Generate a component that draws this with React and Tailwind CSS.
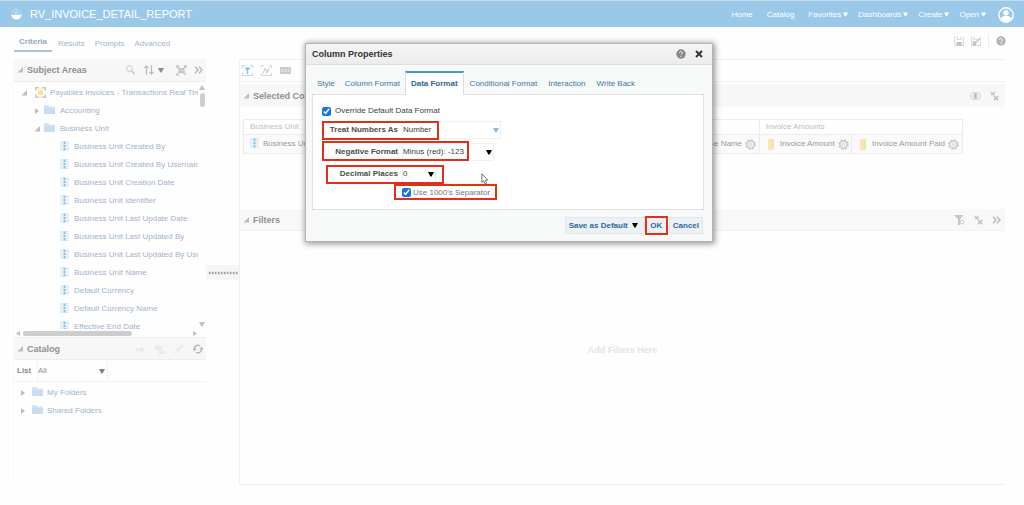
import React from "react";

const fields = [
  "Business Unit Created By",
  "Business Unit Created By Username",
  "Business Unit Creation Date",
  "Business Unit Identifier",
  "Business Unit Last Update Date",
  "Business Unit Last Updated By",
  "Business Unit Last Updated By Username",
  "Business Unit Name",
  "Default Currency",
  "Default Currency Name",
  "Effective End Date",
];

function Down({ className = "", size = "h-[5px] w-[6px]" }) {
  return (
    <svg viewBox="0 0 6 5" className={"shrink-0 " + size + " " + className} fill="currentColor" aria-hidden="true">
      <path d="M0 0h6L3.6 4.6H2.4z" />
    </svg>
  );
}

function Toggle({ open }) {
  return (
    <svg viewBox="0 0 6 6" className="h-[6px] w-[6px] shrink-0 text-[#bdbdbd]" fill="currentColor" aria-hidden="true">
      {open ? <path d="M6 0v5.6H0.4z" /> : <path d="M1 0l4 3-4 3z" />}
    </svg>
  );
}

function Folder() {
  return (
    <svg viewBox="0 0 11 10" className="mb-[2px] h-[10px] w-[11px] shrink-0" aria-hidden="true">
      <path d="M0 .6h4.6l1 1.2H0z" fill="#c3d3e4" />
      <path d="M0 1.8h11V9H0z" fill="#c8ddf1" />
      <path d="M0 1.8h11v.8H0z" fill="#dbe9f6" />
    </svg>
  );
}

function ColumnIcon() {
  return (
    <svg viewBox="0 0 9 10" className="mb-[3px] h-[10px] w-[9px] shrink-0" aria-hidden="true">
      <path d="M0 0h9v10H0z" fill="#e4eef7" />
      <path d="M3 0h3v10H3z" fill="#bfe1f0" />
      <path d="M4 1h1v2H4zM4 4h1v2H4zM4 7h1v2H4z" fill="#86bbd6" />
      <path d="M0 3.4h9M0 6.6h9" stroke="#f6fafd" strokeWidth=".5" />
    </svg>
  );
}

function SubjectIcon() {
  return (
    <svg viewBox="0 0 11 11" className="mb-[2px] h-[11px] w-[11px] shrink-0" aria-hidden="true">
      <circle cx="5.5" cy="5.5" r="3" fill="#f8e69a" />
      <path d="M.8 3.5V.8h3M7.2.8h3v2.7M10.2 7.5v2.7h-3M3.8 10.2h-3V7.5" fill="none" stroke="#cfc3cb" strokeWidth="1.5" />
      <path d="M4 1.2h3M4 9.8h3" stroke="#f6e3b4" />
    </svg>
  );
}

function Gear() {
  return (
    <svg viewBox="0 0 11 11" className="h-[11px] w-[11px] shrink-0" fill="none" stroke="#cacaca" aria-hidden="true">
      <circle cx="5.5" cy="5.5" r="4.6" strokeWidth="1.5" strokeDasharray="2.1 1.5" />
      <circle cx="5.5" cy="5.5" r="3.6" strokeWidth="1.5" />
      <circle cx="5.5" cy="5.5" r="1.2" strokeWidth="1" />
    </svg>
  );
}

function Measure() {
  return (
    <svg viewBox="0 0 6 11" className="h-[11px] w-[6px] shrink-0" aria-hidden="true">
      <path d="M0 0h6v11H0z" fill="#fae5b6" />
      <path d="M3 2h3M4 4h2M3 6h3M4 8h2" stroke="#f3d591" strokeWidth=".7" />
    </svg>
  );
}

function Help({ className }) {
  return (
    <svg viewBox="0 0 10 10" className={"h-[10px] w-[10px] " + className} aria-hidden="true">
      <circle cx="5" cy="5" r="4.7" fill="currentColor" />
      <path d="M3.5 4a1.5 1.4 0 1 1 2.3 1.1c-.6.4-.8.5-.8 1.1" fill="none" stroke="#fff" strokeWidth="1" />
      <path d="M4.5 7h1v1h-1z" fill="#fff" />
    </svg>
  );
}

function Chevrons() {
  return (
    <svg viewBox="0 0 9 8" className="h-[8px] w-[9px]" fill="none" stroke="#b4b4b4" strokeWidth="1.3" aria-hidden="true">
      <path d="M1 .8L4 4 1 7.2M5 .8L8 4 5 7.2" />
    </svg>
  );
}

function RemoveIcon() {
  return (
    <svg viewBox="0 0 9 10" className="h-[10px] w-[9px]" fill="none" stroke="#c2c2c2" aria-hidden="true">
      <path d="M.6 1l4 3.4M4.8.8L1.4 4.400" strokeWidth="1.3" />
      <path d="M4 5l4.2 4.2M8.2 5L4 9.2" strokeWidth="1.7" />
    </svg>
  );
}

function IconButton({ label, children, className = "" }) {
  return (
    <button type="button" aria-label={label} className={"flex items-center justify-center " + className}>
      {children}
    </button>
  );
}

function NavLink({ children, menu }) {
  return (
    <a href="#" className="flex items-center gap-[2px]">
      {children}
      {menu && <Down size="h-[5px] w-[5px]" className="mb-px" />}
    </a>
  );
}

function Header() {
  return (
    <header className="flex h-[27px] items-center justify-between border-t border-[#c5dbe6] bg-[#99c8e9] pl-[11px] pr-[10px] text-white">
      <div className="flex items-center gap-[8px]">
        <svg viewBox="0 0 11 11" className="h-[11px] w-[11px]" aria-hidden="true">
          <path d="M.3 5.2a5.2 5.2 0 0 0 10.4 0c-1.6 1.4-3.2.1-5 .2S2.300 6.800.3 5.200z" fill="#fff" />
          <path d="M.8 4.200C1.400 2 3.200.600 5.500.600s4.100 1.400 4.700 3.600" fill="none" stroke="#cfe4f3" strokeWidth=".8" />
          <path d="M3.400 4.500l2-1.500 2 1.400" fill="none" stroke="#fff" strokeWidth=".8" />
        </svg>
        <h1 className="text-[11px]">RV_INVOICE_DETAIL_REPORT</h1>
      </div>
      <nav className="flex items-center gap-[10px] pt-px">
        <div className="flex gap-[14px] pr-1">
          <NavLink>Home</NavLink>
          <NavLink>Catalog</NavLink>
        </div>
        <NavLink menu>Favorites</NavLink>
        <NavLink menu>Dashboards</NavLink>
        <NavLink menu>Create</NavLink>
        <NavLink menu>Open</NavLink>
        <IconButton label="Account" className="ml-[2px]">
          <svg viewBox="0 0 16 16" className="h-4 w-4" aria-hidden="true">
            <circle cx="8" cy="8" r="7.2" fill="none" stroke="#fff" strokeWidth="1.4" />
            <circle cx="8" cy="5.800" r="2.700" fill="#fff" />
            <path d="M2.800 11.200c1.500-1.900 3.200-2.500 5.200-2.500s3.700.600 5.200 2.500C12 13.600 10 14.600 8 14.600s-4-1-5.200-3.400z" fill="#fff" />
          </svg>
        </IconButton>
      </nav>
    </header>
  );
}

function PageTabs() {
  return (
    <div className="flex h-8 items-start justify-between pl-[14px] pr-[18px] text-[#a3b6ce]">
      <div className="flex gap-[6px]">
        <button type="button" className="h-[25px] border-b-2 border-[#a9c3dc] px-[5px] pt-[6px] font-bold text-[#93a8c4]">Criteria</button>
        <div className="flex gap-[10px] pt-[8px]">
          <button type="button">Results</button>
          <button type="button">Prompts</button>
          <button type="button">Advanced</button>
        </div>
      </div>
      <div className="flex h-[28px] items-center gap-[7px]">
        <IconButton label="Save">
          <svg viewBox="0 0 10 10" className="h-[10px] w-[10px]" aria-hidden="true">
            <path d="M.6.5v9h8.800v-9M3 .5v3h4v-3" fill="none" stroke="#d8d8d8" />
            <path d="M2.500 6h5v3.500h-5z" fill="#bfbfbf" />
          </svg>
        </IconButton>
        <IconButton label="Save as">
          <svg viewBox="0 0 10 10" className="h-[10px] w-[10px]" aria-hidden="true">
            <path d="M.6.5v9h8.800v-9M3 .5v3h3.500" fill="none" stroke="#d8d8d8" />
            <path d="M3 8.500l5.500-6M2.500 6h2v3h-2z" fill="none" stroke="#c4c4c4" strokeWidth="1.300" />
          </svg>
        </IconButton>
        <span className="h-[14px] w-px bg-[#eeeeee]" />
        <IconButton label="Help"><Help className="text-[#b4b4b4]" /></IconButton>
      </div>
    </div>
  );
}

function TreeRow({ children, className }) {
  return <li className={"flex h-[18px] items-center whitespace-nowrap " + className}>{children}</li>;
}

function PanelTitle({ children }) {
  return (
    <h2 className="flex items-center gap-1 whitespace-nowrap text-[9px] font-bold text-[#8f8f8f]">
      <Toggle open />
      {children}
    </h2>
  );
}

function Sidebar() {
  return (
    <aside className="w-[193px] shrink-0 border-l border-[#f8f8f8]">
      <div className="flex h-[23px] items-center justify-between border-b border-[#eeeeee] bg-[#f7f7f7] pl-[3px] pr-[3px]">
        <PanelTitle>Subject Areas</PanelTitle>
        <div className="flex items-center">
          <IconButton label="Search" className="mr-[9px]">
            <svg viewBox="0 0 9 10" className="h-[10px] w-[9px]" fill="none" stroke="#c9c9c9" aria-hidden="true">
              <circle cx="3.500" cy="3.500" r="2.900" />
              <path d="M5.500 5.800L8.400 9" strokeWidth="1.600" />
            </svg>
          </IconButton>
          <IconButton label="Sort" className="mr-[12px] gap-[4px] text-[#8f8f8f]">
            <svg viewBox="0 0 10 10" className="h-[10px] w-[10px]" fill="none" stroke="#b9b9b9" strokeWidth="1.200" aria-hidden="true">
              <path d="M2.500 10V1M.4 3.200L2.500 1l2.100 2.200M7.500 0v9M5.400 6.800L7.500 9l2.100-2.200" />
            </svg>
            <Down />
          </IconButton>
          <IconButton label="Add subject area" className="mr-[7px]">
            <svg viewBox="0 0 11 11" className="h-[11px] w-[11px]" fill="none" stroke="#c4c4c4" strokeWidth="1.200" aria-hidden="true">
              <path d="M.8 3V.8H3M8 .8h2.200V3M.8 8v2.200H3M3 3.500h5v4H3zM1.500 1.500l7 7M9.500 1.500l-7 7" />
              <path d="M6.500 8.500h4M8.500 6.500v4" stroke="#d4d4d4" />
            </svg>
          </IconButton>
          <IconButton label="Collapse panel"><Chevrons /></IconButton>
        </div>
      </div>

      <div className="flex h-[247px] pt-[2px]">
        <ul className="min-w-0 flex-1 overflow-hidden text-[#a3b3c8]">
          <TreeRow className="gap-1 pl-[7px]">
            <Toggle open /><span className="w-[2px]" /><SubjectIcon /><span>Payables Invoices - Transactions Real Time</span>
          </TreeRow>
          <TreeRow className="gap-1 pl-[20px]">
            <Toggle /><Folder /><span className="pl-px">Accounting</span>
          </TreeRow>
          <TreeRow className="gap-1 pl-[20px]">
            <Toggle open /><Folder /><span className="pl-px">Business Unit</span>
          </TreeRow>
          {fields.map((f) => (
            <TreeRow key={f} className="gap-[5px] pl-[46px]"><ColumnIcon /><span>{f}</span></TreeRow>
          ))}
        </ul>
        <div className="flex w-2 flex-col items-center justify-between pb-[2px] pt-[1px] text-[#c3c3c3]">
          <div className="flex flex-col items-center gap-[3px]">
            <Down className="rotate-180" />
            <span className="h-[14px] w-[5px] rounded-full bg-[#cdcdcd]" />
          </div>
          <Down />
        </div>
      </div>
      <div className="flex h-2 items-center pl-[2px] pr-[9px] text-[#c3c3c3]">
        <svg viewBox="0 0 4 5" className="h-[5px] w-[4px]" fill="currentColor" aria-hidden="true"><path d="M4 0v5L0 2.500z" /></svg>
        <span className="ml-[3px] h-[5px] w-[109px] rounded-full bg-[#cdcdcd]" />
        <svg viewBox="0 0 4 5" className="ml-auto h-[5px] w-[4px]" fill="currentColor" aria-hidden="true"><path d="M0 0v5l4-2.500z" /></svg>
      </div>

      <div className="flex h-[23px] items-center justify-between border-y border-[#eeeeee] bg-[#f7f7f7] pl-[3px] pr-[3px]">
        <PanelTitle>Catalog</PanelTitle>
        <div className="flex items-center gap-[9px] text-[#ebebeb]">
          <IconButton label="Open item">
            <svg viewBox="0 0 10 10" className="h-[10px] w-[10px]" fill="currentColor" aria-hidden="true"><path d="M0 4h5V1.500L9 5.500l-4 3.500V7H0z" /></svg>
          </IconButton>
          <IconButton label="Copy">
            <svg viewBox="0 0 10 10" className="h-[10px] w-[10px]" fill="currentColor" aria-hidden="true"><path d="M0 1h3l1 1h3v4H0zM3 6.500h7V10H4z" /></svg>
          </IconButton>
          <IconButton label="Edit">
            <svg viewBox="0 0 10 10" className="h-[10px] w-[10px]" fill="currentColor" aria-hidden="true"><path d="M8 0l2 1.800L3.500 8.500 0 10l1.200-3.400z" /></svg>
          </IconButton>
          <IconButton label="Refresh">
            <svg viewBox="0 0 10 10" className="h-[10px] w-[10px]" fill="none" stroke="#b2b2b2" strokeWidth="1.300" aria-hidden="true">
              <path d="M1.300 6A4 4 0 0 1 7 1.600M8.700 4A4 4 0 0 1 3 8.400" />
              <path d="M0 4.600h3.400L1.600 7.600zM6.600 5.400H10L8.400 2.400z" fill="#b2b2b2" stroke="none" />
            </svg>
          </IconButton>
        </div>
      </div>
      <div className="flex h-[22px] items-center border-b border-[#f3f3f3] pl-[3px]">
        <label htmlFor="catalog-list" className="w-5 font-bold text-[#8a8a8a]">List</label>
        <div className="relative">
          <select id="catalog-list" className="h-[20px] w-[71px] appearance-none border-x border-[#f3f3f3] text-[#8e8e8e]">
            <option>All</option>
          </select>
          <Down className="pointer-events-none absolute right-[3px] top-2 text-[#858585]" />
        </div>
      </div>
      <ul className="pt-[2px] text-[#9db5d2]">
        {["My Folders", "Shared Folders"].map((f) => (
          <TreeRow key={f} className="gap-1 pl-[6px]">
            <Toggle /><span className="pl-[2px]"><Folder /></span><span>{f}</span>
          </TreeRow>
        ))}
      </ul>
    </aside>
  );
}

function Workspace() {
  const cell = "border border-[#ececec] px-[6px] text-left font-normal";
  return (
    <main className="flex min-w-0 flex-1 flex-col border-b border-l border-[#f0f0f0]">
      <div className="flex h-[23px] items-center gap-2 border-y border-[#f0f0f0] pl-[2px]">
        <IconButton label="Show filters">
          <svg viewBox="0 0 11 11" className="h-[11px] w-[11px]" fill="none" aria-hidden="true">
            <path d="M3 .5H.5V3M8 .5h2.500V3M.5 8v2.500H3M10.500 8v2.500H8M.5 10.500h10" stroke="#b9d8ed" />
            <path d="M2.500 2.500h6L6.200 5.500v3.800H4.800V5.500z" fill="#8dbde2" />
          </svg>
        </IconButton>
        <IconButton label="Edit formula">
          <svg viewBox="0 0 11 11" className="h-[11px] w-[11px]" fill="none" stroke="#d8d8d8" aria-hidden="true">
            <path d="M3 .5H.5V3M8 .5h2.500V3M.5 8v2.500H3M10.500 8v2.500H8M.5 10.500h10" />
            <path d="M2 8.500l2-5 1.500 3 3-4M5 8.500l3-4" stroke="#c6c6c6" />
          </svg>
        </IconButton>
        <IconButton label="Rename">
          <svg viewBox="0 0 11 7" className="h-[7px] w-[11px]" aria-hidden="true">
            <path d="M0 0h11v7H0z" fill="#cbcbcb" />
            <path d="M1.500 2h2v3h-2zM4.500 2h2v3h-2zM7.500 2h2v3h-2z" fill="#dedede" />
          </svg>
        </IconButton>
      </div>
      <section className="pt-[2px]">
        <div className="flex h-[23px] items-center justify-between bg-[#f7f7f7] pl-[3px] pr-[6px]">
          <PanelTitle>Selected Columns</PanelTitle>
          <div className="flex items-center gap-[9px]">
            <IconButton label="Combine results">
              <svg viewBox="0 0 11 8" className="h-[8px] w-[11px]" fill="none" stroke="#cecece" aria-hidden="true">
                <circle cx="4" cy="4" r="3.400" /><circle cx="7" cy="4" r="3.400" />
                <path d="M5.500 1.200c1.500 1.500 1.500 4 0 5.600-1.500-1.600-1.500-4.100 0-5.600z" fill="#b4b4b4" />
              </svg>
            </IconButton>
            <IconButton label="Remove all columns"><RemoveIcon /></IconButton>
          </div>
        </div>
        <div className="pb-[55px] pl-[3px] pr-[42px] pt-3">
          <table className="w-full table-fixed border-collapse">
            <colgroup>
              <col />
              <col className="w-[260px]" />
              <col className="w-[92px]" />
              <col className="w-[111px]" />
            </colgroup>
            <thead className="text-[#bdbdbd]">
              <tr className="h-[15px]">
                <th className={cell}>Business Unit</th>
                <th className={cell}></th>
                <th className={cell} colSpan={2}>Invoice Amounts</th>
              </tr>
            </thead>
            <tbody className="bg-[#fafafb] text-[#999999]">
              <tr className="h-[19px]">
                <td className={cell}><div className="flex items-center gap-1"><ColumnIcon />Business Unit Name</div></td>
                <td className="border border-[#ececec] pr-[3px]"><div className="flex items-center justify-end gap-[3px]">Type Name<Gear /></div></td>
                <td className="border border-[#ececec] pl-2"><div className="flex items-center gap-[3px] whitespace-nowrap"><Measure /><span className="pl-[3px]">Invoice Amount</span><Gear /></div></td>
                <td className="border border-[#ececec] pl-2"><div className="flex items-center gap-[3px] whitespace-nowrap"><Measure /><span className="pl-[3px]">Invoice Amount Paid</span><Gear /></div></td>
              </tr>
            </tbody>
          </table>
        </div>
      </section>
      <section className="flex flex-1 flex-col">
        <div className="flex h-[22px] items-center justify-between border-b border-[#f3f3f3] bg-[#f8f8f8] pl-[3px] pr-1">
          <PanelTitle>Filters</PanelTitle>
          <div className="flex items-center gap-[9px]">
            <IconButton label="Add filter">
              <svg viewBox="0 0 11 10" className="h-[10px] w-[11px]" aria-hidden="true">
                <path d="M0 0h9.500L6 4.200V10H4V4.200z" fill="#c6c6c6" />
                <circle cx="8" cy="7" r="2" fill="#f8f8f8" stroke="#c8c8c8" />
              </svg>
            </IconButton>
            <IconButton label="Remove all filters"><RemoveIcon /></IconButton>
            <IconButton label="More"><Chevrons /></IconButton>
          </div>
        </div>
        <p className="flex flex-1 items-center justify-center pb-[16px] text-[9px] font-bold text-[#e4e4e4]">Add Filters Here</p>
      </section>
    </main>
  );
}

const mark = "pointer-events-none absolute border-2 border-[#e0301c] ";

function Field({ id, label, value, width, arrow, children }) {
  return (
    <div className="relative flex h-[18px] items-center gap-1">
      <label htmlFor={id} className="w-[85px] text-right font-bold text-[#4c4c4c]">{label}</label>
      <div className="relative">
        <select id={id} className={"h-[18px] appearance-none border border-[#f0f0f0] bg-white text-[#3c3c3c] " + width}>
          <option>{value}</option>
        </select>
        <Down className={"pointer-events-none absolute right-[2px] top-[7px] " + arrow} />
      </div>
      {children}
    </div>
  );
}

function ColumnDialog() {
  const btn = "h-[17px] border border-[#e3e6e9] bg-[#eef1f4] font-bold text-[#2d699d] ";
  return (
    <div className="absolute inset-x-0 top-[43px] flex justify-center pr-[6px]">
      <div role="dialog" aria-labelledby="dialog-title" className="relative w-[408px] border border-[#b4b4b4] bg-[#f7f8f8] shadow-[1px_1px_6px_1px_rgba(0,0,0,0.4)]">
        <div className="flex h-[21px] items-center justify-between border-b border-[#dddddd] bg-linear-to-b from-[#f4f4f4] to-[#ececec] pl-[6px] pr-[9px]">
          <h2 id="dialog-title" className="text-[9px] font-bold text-[#333333]">Column Properties</h2>
          <div className="flex items-center gap-[9px]">
            <IconButton label="Dialog help"><Help className="text-[#868686]" /></IconButton>
            <IconButton label="Close">
              <svg viewBox="0 0 8 8" className="h-[8px] w-[8px]" stroke="#333" strokeWidth="2" aria-hidden="true"><path d="M1 1l6 6M7 1L1 7" /></svg>
            </IconButton>
          </div>
        </div>
        <div className="pl-[6px] pr-2 pt-[6px]">
          <div role="tablist" className="flex h-[23px] text-[#4078a6]">
            <button role="tab" type="button" className="px-[5px] pt-[3px]">Style</button>
            <button role="tab" type="button" className="px-[5px] pt-[3px]">Column Format</button>
            <button role="tab" type="button" aria-selected="true" className="relative -mb-px border-x border-t-2 border-x-[#dddddd] border-t-[#4a97ca] bg-white px-[5px] font-bold text-[#2d6595]">Data Format</button>
            <div className="flex gap-px pl-px">
              <button role="tab" type="button" className="px-[5px] pt-[3px]">Conditional Format</button>
              <button role="tab" type="button" className="px-[5px] pt-[3px]">Interaction</button>
              <button role="tab" type="button" className="px-[5px] pt-[3px]">Write Back</button>
            </div>
          </div>
          <div className="border border-[#dfe1e3] bg-white pb-[7px] pt-2">
            <div className="mb-[2px] flex h-[16px] items-center gap-1 pl-[9px] text-[#404040]">
              <input id="override" type="checkbox" defaultChecked className="h-[9px] w-[9px] accent-[#1473e6]" />
              <label htmlFor="override">Override Default Data Format</label>
            </div>
            <div className="flex flex-col gap-1">
              <Field id="treat" label="Treat Numbers As" value="Number" width="w-[99px]" arrow="text-[#8dbbe0]">
                <span className={mark + "left-[9px] top-0 h-[19px] w-[117px]"} />
              </Field>
              <Field id="negative" label="Negative Format" value="Minus (red): -123" width="w-[92px]" arrow="text-black">
                <span className={mark + "-top-[2px] left-[9px] h-[20px] w-[147px]"} />
              </Field>
              <Field id="decimals" label="Decimal Places" value="0" width="w-[34px]" arrow="text-black">
                <span className={mark + "left-[13px] top-0 h-[19px] w-[118px]"} />
              </Field>
            </div>
            <div className="relative flex h-[19px] items-center gap-[2px] pl-[89px] text-[#777777]">
              <input id="separator" type="checkbox" defaultChecked className="h-[9px] w-[9px] accent-[#1473e6]" />
              <label htmlFor="separator">Use 1000's Separator</label>
              <span className={mark + "left-[81px] top-px h-[16px] w-[103px]"} />
            </div>
          </div>
        </div>
        <div className="flex h-[31px] items-center justify-end pr-[9px]">
          <button type="button" className={btn + "flex items-center gap-1 pl-[3px] pr-[6px]"}>Save as Default<Down className="text-black" /></button>
          <div className="relative">
            <button type="button" className={btn + "w-[23px]"}>OK</button>
            <span className={mark + "-top-px left-0 h-[19px] w-[23px]"} />
          </div>
          <button type="button" className={btn + "ml-px px-[3px]"}>Cancel</button>
        </div>
        <svg viewBox="0 0 8 12" className="pointer-events-none absolute left-[175px] top-[129px] h-[12px] w-[8px]" aria-hidden="true">
          <path d="M.8.8v8.600l2-1.700 1.300 3.200 1.500-.6-1.300-3.100h2.600z" fill="#fff" stroke="#555" strokeWidth=".8" />
        </svg>
      </div>
    </div>
  );
}

export default function App() {
  return (
    <div className="relative flex min-h-screen flex-col bg-[#fefefe] pb-5 font-['Liberation_Sans',Arial,sans-serif] text-[8px] leading-[10px]">
      <Header />
      <PageTabs />
      <div className="flex flex-1 pl-[13px] pr-[19px]">
        <Sidebar />
        <div className="flex w-[33px] shrink-0 items-start pt-[206px]">
          <button type="button" aria-label="Resize panels" className="flex h-[15px] w-full items-center justify-center bg-[#f6f6f6]">
            <svg viewBox="0 0 30 4" className="h-[4px] w-[30px]" fill="#8d8d8d" aria-hidden="true">
              {[0, 1, 2, 3, 4, 5, 6, 7, 8, 9].map((i) => (
                <path key={i} transform={`translate(${i * 3} 0)`} d="M2.400 .3v3.400L.4 2z" />
              ))}
            </svg>
          </button>
        </div>
        <Workspace />
      </div>
      <ColumnDialog />
    </div>
  );
}
